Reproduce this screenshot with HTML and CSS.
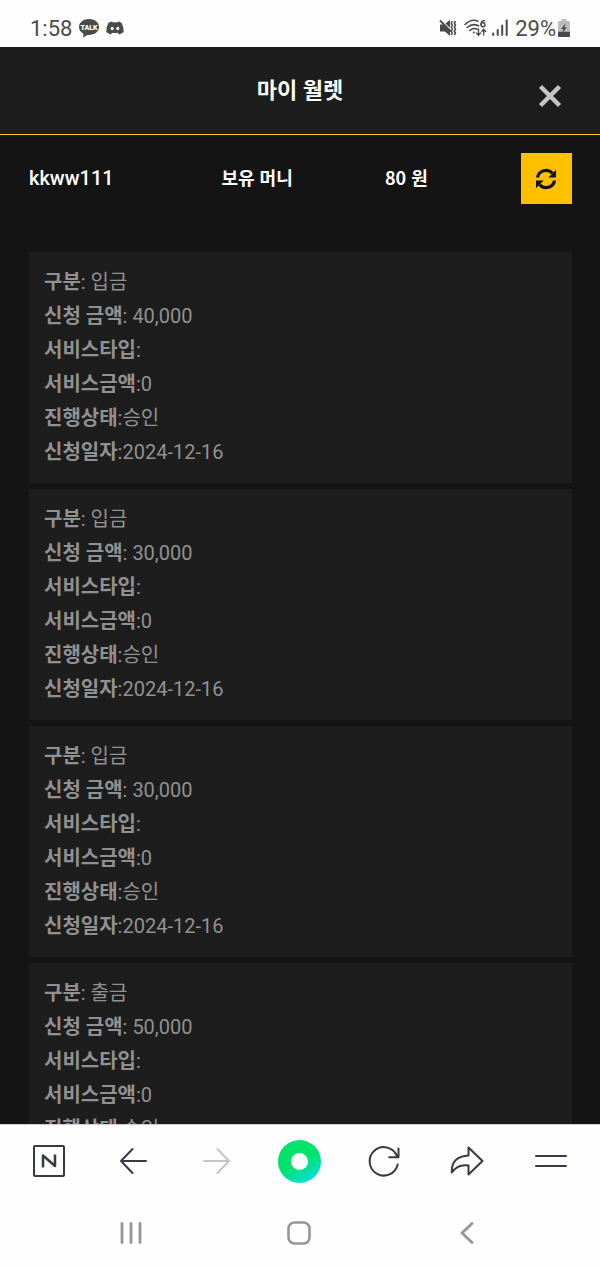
FILE: index.html
```html
<!DOCTYPE html>
<html lang="ko">
<head>
    <meta charset="UTF-8">
    <meta name="viewport" content="width=device-width, initial-scale=1.0">
    <title>마이 월렛</title>
    <link rel="stylesheet" href="styles.css">
</head>
<body>

    <!-- status bar -->
    <div class="status-bar">
        <div class="status-left">
            <span>1:58</span>
            <svg class="talk" width="20" height="19" viewBox="0 0 20 19">
                <path d="M10 0C4.400 0 0 3.500 0 8c0 3 1.800 5.400 4.500 6.800L4 18.500l4.500-2.600c6.500.600 11.500-3 11.500-7.900C20 3.500 15.600 0 10 0z" fill="#4a4a4a"/>
                <text x="10" y="10.500" text-anchor="middle">TALK</text>
            </svg>
            <svg width="18" height="14" viewBox="0 0 18 14">
                <path d="M6.300 0.500L6.800 1.400Q9 1 11.200 1.400L11.700 0.500Q14 0.800 15.500 1.800Q18 6 17.700 11Q15.500 13 13 13.400L12 11.700Q9 12.500 6 11.700L5 13.400Q2.500 13 .3 11Q0 6 2.500 1.800Q4 .8 6.300 .5z" fill="#4a4a4a"/>
                <ellipse cx="6.200" cy="7.500" rx="1.500" ry="1.700" fill="#fff"/>
                <ellipse cx="11.800" cy="7.500" rx="1.500" ry="1.700" fill="#fff"/>
            </svg>
        </div>
        <div class="status-right">
            <svg width="18" height="18" viewBox="0 0 18 18">
                <path d="M1 5.500h4L11 11.500V17l-5-4.500H1z" fill="#4a4a4a"/>
                <path d="M6.500 4.500L11 .8v8z" fill="#4a4a4a"/>
                <path d="M1 1.500l11 11" fill="none" stroke="#4a4a4a" stroke-width="1.800"/>
                <path d="M13.300 2l-1 2 1 2-1 2 1 2-1 2 1 2-1 2M16.500 2l-1.200 2 1.200 2-1.200 2 1.200 2-1.200 2 1.200 2-1.200 2" fill="none" stroke="#4a4a4a" stroke-width="1.500"/>
            </svg>
            <svg class="wifi" width="23" height="18" viewBox="0 0 23 18" fill="none" stroke="#4a4a4a" stroke-width="1.600" stroke-linecap="round">
                <path d="M1 5.500Q7.500-.8 14 2.200M3.200 8.500Q8.500 3.700 14.500 6.800M5.700 11.500Q9.500 8.300 13 10.300"/>
                <circle cx="9.800" cy="13.500" r="1" fill="#4a4a4a" stroke="none"/>
                <path d="M20.500 1.800Q17 1.500 17 5.500" stroke-width="1.400"/>
                <circle cx="19" cy="5.700" r="2" stroke-width="1.400"/>
                <path d="M14.500 10v6m-2-2l2 2.300 2-2.300M19.700 16v-5.500m-2 2l2-2.300 2 2.300" stroke-width="1.300"/>
            </svg>
            <svg width="16" height="18" viewBox="0 0 16 18" fill="none" stroke="#4a4a4a" stroke-width="2" stroke-linecap="round">
                <path d="M1.200 14.500v1.500M5.700 11v5M10.200 6.500v9.500"/>
                <path d="M14.700 1.500v14.500"/>
            </svg>
            <span class="percent">29%</span>
            <svg width="12" height="18" viewBox="0 0 12 18">
                <path d="M3.500 0h5v2H11l1 1v10H0V3l1-1h2.500z" fill="#bdbdbd"/>
                <path d="M0 12.800h12V17q0 1-1 1H1q-1 0-1-1z" fill="#4a4a4a"/>
                <path d="M7.500 4.500L3 10h2.500l-1.200 4L9 8.500H6.500z" fill="#4a4a4a"/>
            </svg>
        </div>
    </div>

    <div class="wallet">
        <header class="wallet-header">
            <h1>마이 월렛</h1>
            <button class="close" type="button" aria-label="닫기">
                <svg width="24" height="24" viewBox="0 0 24 24">
                    <path d="M2.500 2.500l19 19M21.500 2.500l-19 19" stroke="#c4c4c4" stroke-width="4.500"/>
                </svg>
            </button>
        </header>

        <div class="account">
            <span class="user">kkww111</span>
            <span class="money">보유 머니</span>
            <span class="money">80 원</span>
            <button class="refresh" type="button" aria-label="새로고침">
                <svg width="22" height="22" viewBox="0 0 22 22">
                    <path d="M2.500 9.500A8.500 8.500 0 0 1 17.300 5.300M19.500 12.500A8.500 8.500 0 0 1 4.700 16.700" fill="none" stroke="#111" stroke-width="3.200"/>
                    <path d="M21 1.800v7.700h-7.700zM1 20.200v-7.700h7.700z" fill="#111"/>
                </svg>
            </button>
        </div>

        <div class="list">
            <div class="item">
                <p><b>구분</b>: 입금</p>
                <p><b>신청 금액</b>: 40,000</p>
                <p><b>서비스타입</b>:</p>
                <p><b>서비스금액</b>:0</p>
                <p><b>진행상태</b>:승인</p>
                <p><b>신청일자</b>:2024-12-16</p>
            </div>
            <div class="item">
                <p><b>구분</b>: 입금</p>
                <p><b>신청 금액</b>: 30,000</p>
                <p><b>서비스타입</b>:</p>
                <p><b>서비스금액</b>:0</p>
                <p><b>진행상태</b>:승인</p>
                <p><b>신청일자</b>:2024-12-16</p>
            </div>
            <div class="item">
                <p><b>구분</b>: 입금</p>
                <p><b>신청 금액</b>: 30,000</p>
                <p><b>서비스타입</b>:</p>
                <p><b>서비스금액</b>:0</p>
                <p><b>진행상태</b>:승인</p>
                <p><b>신청일자</b>:2024-12-16</p>
            </div>
            <div class="item">
                <p><b>구분</b>: 출금</p>
                <p><b>신청 금액</b>: 50,000</p>
                <p><b>서비스타입</b>:</p>
                <p><b>서비스금액</b>:0</p>
                <p><b>진행상태</b>:승인</p>
            </div>
        </div>
    </div>

    <!-- browser toolbar -->
    <nav class="toolbar">
        <button type="button" aria-label="홈">
            <svg width="34" height="34" viewBox="0 0 34 34" fill="none" stroke="#363a42" stroke-width="2">
                <rect x="2" y="2" width="30" height="30" rx="1"/>
                <path d="M11 23.500V11.500L23 22V10.500" stroke-width="2.500" stroke-linejoin="round"/>
            </svg>
        </button>
        <button type="button" aria-label="뒤로">
            <svg width="28" height="28" viewBox="0 0 28 28" fill="none" stroke="#363a42" stroke-width="2" stroke-linecap="round" stroke-linejoin="round">
                <path d="M13.500 2L2 14l11.500 12M2 14h25"/>
            </svg>
        </button>
        <button type="button" aria-label="앞으로" disabled>
            <svg width="28" height="28" viewBox="0 0 28 28" fill="none" stroke="#c6c6c6" stroke-width="2" stroke-linecap="round" stroke-linejoin="round">
                <path d="M15.500 2L27 14 15.500 26M27 14H2"/>
            </svg>
        </button>
        <button type="button" aria-label="그린닷">
            <span class="green-dot"></span>
        </button>
        <button type="button" aria-label="새로고침">
            <svg width="32" height="32" viewBox="0 0 32 32" fill="none" stroke="#363a42" stroke-width="2" stroke-linecap="round" stroke-linejoin="round">
                <path d="M29.700 19.500A14.200 14.200 0 1 1 28.800 10.500M30.500 3.500v8.800h-9.300"/>
            </svg>
        </button>
        <button type="button" aria-label="공유">
            <svg width="34" height="30" viewBox="0 0 34 30" fill="none" stroke="#363a42" stroke-width="2" stroke-linecap="round" stroke-linejoin="round">
                <path d="M18.500 1.500L32.500 15 18.500 28.500V19.500Q8 17.500 1.800 26.500Q1 10.500 18.500 9.500z"/>
            </svg>
        </button>
        <button type="button" aria-label="메뉴">
            <svg width="32" height="14" viewBox="0 0 32 14" stroke="#363a42" stroke-width="2" stroke-linecap="round">
                <path d="M1 2h30M1 12h30"/>
            </svg>
        </button>
    </nav>

    <!-- android navigation -->
    <nav class="system-nav">
        <button type="button" aria-label="최근 앱">
            <svg width="22" height="22" viewBox="0 0 22 22" stroke="#969696" stroke-width="2.800" stroke-linecap="round">
                <path d="M2 1.500v19M11 1.500v19M20 1.500v19"/>
            </svg>
        </button>
        <button type="button" aria-label="홈 화면">
            <svg width="24" height="24" viewBox="0 0 24 24" fill="none" stroke="#969696" stroke-width="2.600">
                <rect x="1.500" y="1.500" width="21" height="21" rx="6"/>
            </svg>
        </button>
        <button type="button" aria-label="이전">
            <svg width="14" height="22" viewBox="0 0 14 22" fill="none" stroke="#969696" stroke-width="2.800" stroke-linecap="round" stroke-linejoin="round">
                <path d="M12 1.500L2 11l10 9.500"/>
            </svg>
        </button>
    </nav>

</body>
</html>
```
FILE: styles.css
```css
*{
    box-sizing: border-box;
}

body{
    margin: 0;
    height: 100vh;
    display: flex;
    flex-direction: column;
    font-family: Roboto, 'Noto Sans CJK KR', sans-serif;
    background-color: #141414;
}

button{
    display: flex;
    align-items: center;
    justify-content: center;
    padding: 0;
    border: 0;
    background: none;
}

svg{
    flex-shrink: 0;
}

/* status bar */
.status-bar{
    flex-shrink: 0;
    display: flex;
    justify-content: space-between;
    height: 47px;
    padding: 9px 30px 0;
    background-color: #fefefe;
    color: #4a4a4a;
    font-size: 22px;
}

.status-left,
.status-right{
    display: flex;
    align-items: center;
    gap: 7px;
}

.status-right .wifi{
    margin-right: -2px;
}

.status-right .percent{
    margin-right: -5px;
}

.talk text{
    fill: #fff;
    font-size: 7px;
    font-weight: 900;
}

/* wallet */
.wallet{
    flex: 1;
    min-height: 0;
    overflow: hidden;
}

.wallet-header{
    display: grid;
    grid-template-columns: 1fr auto 1fr;
    align-items: center;
    height: 88px;
    padding: 0 38px;
    background-color: #1d1d1d;
    border-bottom: 1px solid #ffc629;
}

.wallet-header h1{
    grid-column: 2;
    margin: 0;
    color: #fff;
    font-size: 22px;
    line-height: 32px;
}

.close{
    justify-self: end;
    padding-top: 10px;
}

.account{
    display: grid;
    grid-template-columns: 28% 28% 27% 17%;
    align-items: center;
    padding: 18px 28px 48px 29px;
    color: #fff;
}

.account .user{
    padding-bottom: 2px;
    font-size: 20px;
    font-weight: 500;
}

.account .money{
    padding-bottom: 4px;
    font-family: 'Noto Sans CJK KR', sans-serif;
    font-size: 18px;
    font-weight: bold;
    text-align: center;
}

.refresh{
    justify-self: end;
    width: 51px;
    height: 51px;
    background-color: #ffc000;
}

.list{
    display: flex;
    flex-direction: column;
    gap: 6px;
    padding: 0 28px 0 29px;
}

.item{
    padding: 13px 15px 14px;
    background-color: #1d1d1d;
    color: #919191;
    font-size: 20px;
    line-height: 34px;
}

.item p{
    margin: 0;
}

/* bottom bars */
.toolbar{
    flex-shrink: 0;
    display: grid;
    grid-template-columns: repeat(7, 1fr);
    height: 75px;
    padding: 0 7px 2px;
    background-color: #fefefe;
    border-top: 1px solid #d0d0d0;
}

.green-dot{
    width: 43px;
    height: 43px;
    border: 13px solid transparent;
    border-radius: 50%;
    background: linear-gradient(#fefefe, #fefefe) padding-box, linear-gradient(150deg, #00e36a 50%, #00dfe0 90%) border-box;
}

.system-nav{
    flex-shrink: 0;
    display: grid;
    grid-template-columns: repeat(3, 1fr);
    height: 68px;
    padding: 0 49px 0 47px;
    background-color: #fefefe;
}
```
